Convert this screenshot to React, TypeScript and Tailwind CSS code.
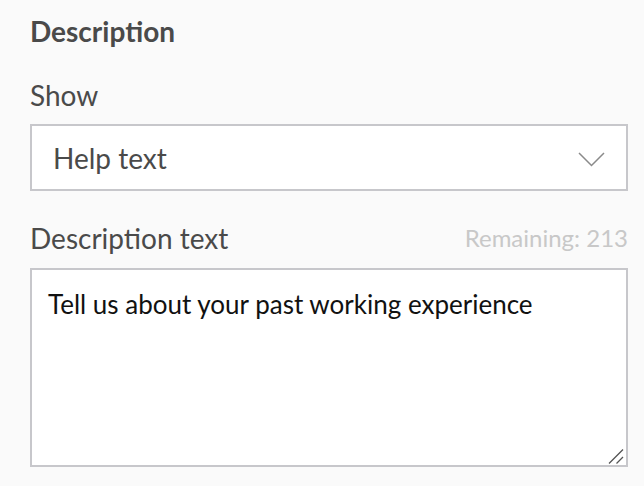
import React from "react";

export default function App() {
  return (
    <div className="w-[644px] h-[486px] bg-[#fafafa] overflow-hidden" style={{ fontFamily: "Lato, 'Noto Sans', sans-serif" }}>
      <div className="pl-[30px] pr-[16px] pt-[14px]">
        <div className="text-[28px] leading-[35px] font-bold text-[#4a4a4a]">Description</div>
        <div className="mt-[29px] text-[28px] leading-[34px] text-[#4a4a4a]">Show</div>
        <div className="mt-[12px] h-[67px] border-2 border-[#c7c7cb] bg-white flex items-center justify-between pl-[21px] pr-[21px]">
          <span className="text-[28px] text-[#4a4a4a]">Help text</span>
          <svg className="mt-[4px]" width="27" height="15" viewBox="0 0 27 15" fill="none">
            <path d="M1 1 L13.5 13.5 L26 1" stroke="#8a8a8a" strokeWidth="1.5" />
          </svg>
        </div>
        <div className="mt-[30px] flex items-start justify-between">
          <span className="text-[28px] leading-[35px] text-[#4a4a4a]">Description text</span>
          <span className="mt-[2px] text-[24px] leading-[30px] text-[#c8c8c8]">Remaining: 213</span>
        </div>
        <div className="relative mt-[12px] h-[199px] border-2 border-[#c7c7cb] bg-white px-[16px] pt-[18px]">
          <span className="text-[26px] leading-[32px] text-[#111]">Tell us about your past working experience</span>
          <svg className="absolute right-[2px] bottom-[1px]" width="16" height="16" viewBox="0 0 16 16">
            <path d="M1 15.5 L15 1.5 M8.5 15.5 L15 9" stroke="#555" strokeWidth="1.3" />
          </svg>
        </div>
      </div>
    </div>
  );
}
